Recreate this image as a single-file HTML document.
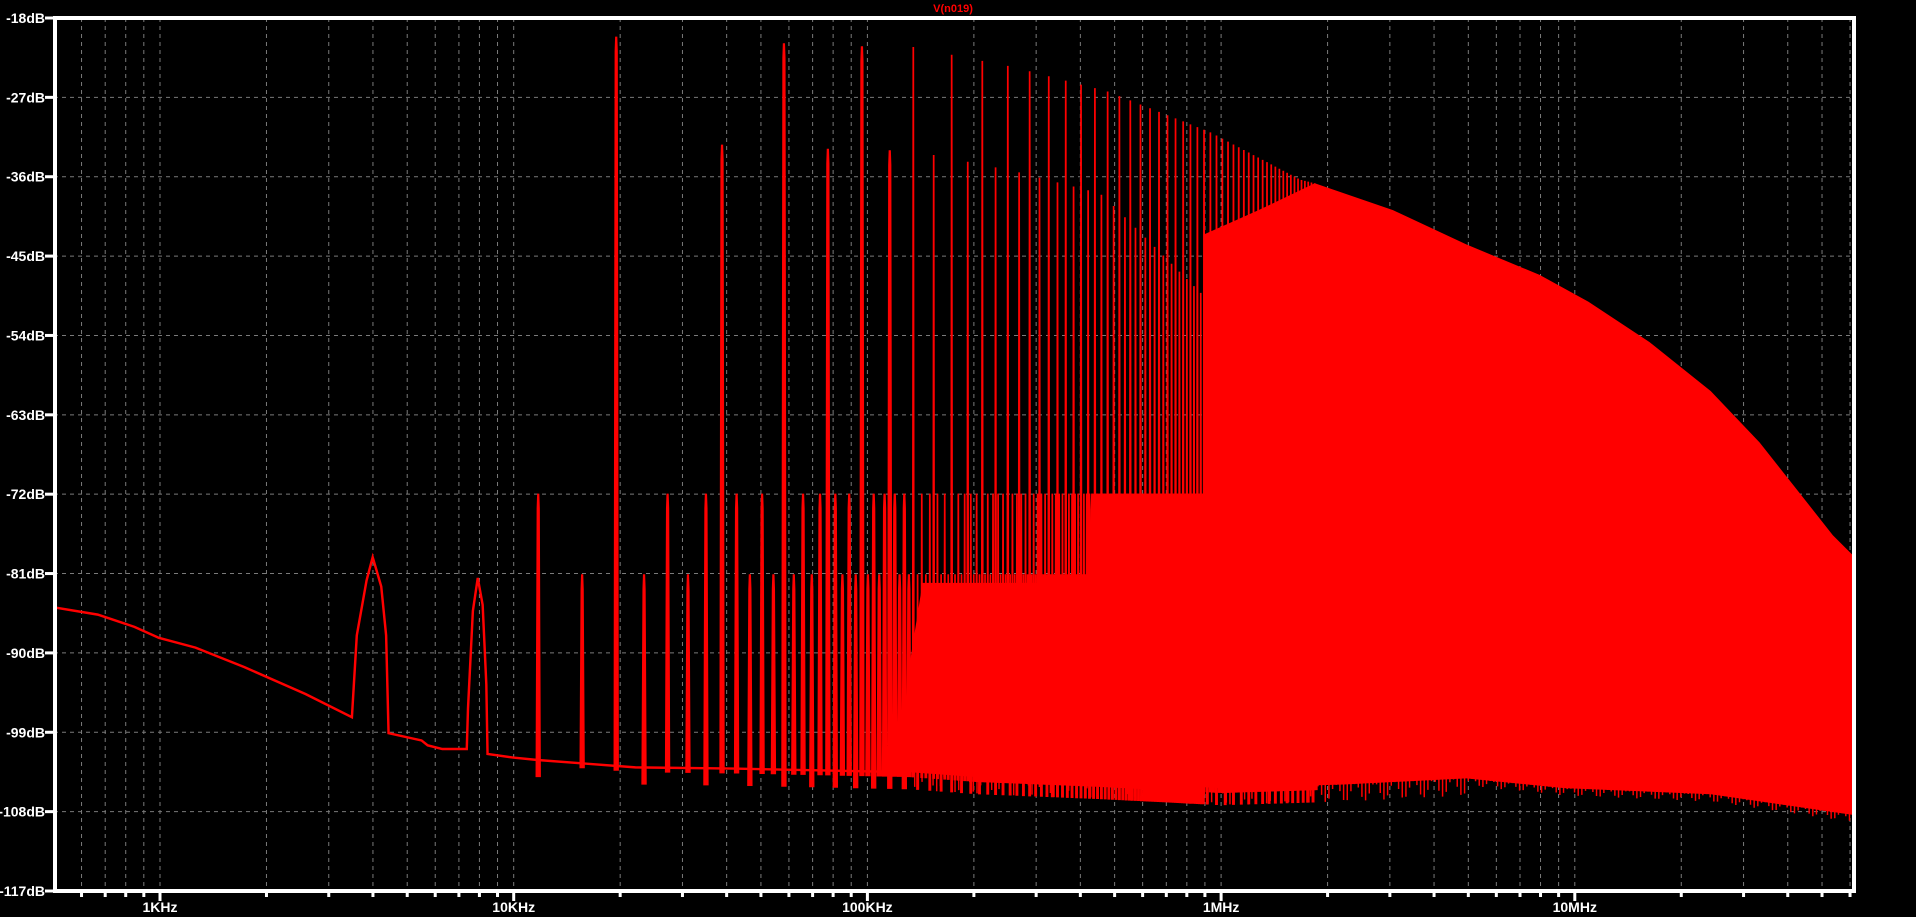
<!DOCTYPE html>
<html><head><meta charset="utf-8"><style>
html,body{margin:0;padding:0;background:#000;width:1916px;height:917px;overflow:hidden}
svg{display:block}
text{font-family:"Liberation Sans",sans-serif;font-weight:bold;fill:#fff}
</style></head><body>
<svg id="s" width="1916" height="917" viewBox="0 0 1916 917" xmlns="http://www.w3.org/2000/svg">
<rect width="1916" height="917" fill="#000"/>
<g id="grid" stroke="#7a7a7a" stroke-width="1" stroke-dasharray="4,4"></g>
<g id="data" transform="scale(1.2219)"></g>
<g id="axes"></g>
<text x="953" y="12" font-size="11" text-anchor="middle" style="fill:#ff0000">V(n019)</text>
</svg>
<script>
var NS="http://www.w3.org/2000/svg";
function el(p,t,a,txt){var e=document.createElementNS(NS,t);for(var k in a)e.setAttribute(k,a[k]);if(txt)e.textContent=txt;document.getElementById(p).appendChild(e);return e;}
var L=54,R=1854,T=18,B=891,D=353.7;
function X(f){return 160+D*Math.log10(f/1000);}
for(var i=1;i<11;i++){var y=T+i*(B-T)/11;el('grid','line',{x1:L,x2:R,y1:y,y2:y});}
var decs=[100,1000,10000,100000,1e6,1e7];
decs.forEach(function(d){for(var m=1;m<10;m++){var x=X(d*m);if(x>L+2&&x<R-2){el('grid','line',{x1:x,x2:x,y1:T,y2:B});
el('axes','rect',{x:x-1.5,y:B,width:3,height:m==1?10:6,fill:'#fff'});}}});
el('axes','rect',{x:L-1,y:T-2,width:R-L+2,height:4,fill:'#fff'});
el('axes','rect',{x:L-1,y:B-2,width:R-L+2,height:4,fill:'#fff'});
el('axes','rect',{x:L-1,y:T-2,width:4,height:B-T+4,fill:'#fff'});
el('axes','rect',{x:R-2,y:T-2,width:4,height:B-T+4,fill:'#fff'});
for(var i=0;i<12;i++){var y=T+i*(B-T)/11;el('axes','rect',{x:L-9,y:y-1.5,width:9,height:3,fill:'#fff'});
el('axes','text',{x:L-9,y:y+5,'font-size':14,'text-anchor':'end'},(-18-9*i)+'dB');}
[['1KHz',1e3],['10KHz',1e4],['100KHz',1e5],['1MHz',1e6],['10MHz',1e7]].forEach(function(a){
el('axes','text',{x:X(a[1]),y:912,'font-size':14,'text-anchor':'middle'},a[0]);});
function xd(f){return 130+287.7*Math.log10(f/1000);}
function interp(pts,x){if(x<=pts[0][0])return pts[0][1];for(var i=1;i<pts.length;i++){if(x<=pts[i][0]){var a=pts[i-1],b=pts[i];return a[1]+(b[1]-a[1])*(x-a[0])/(b[0]-a[0]);}}return pts[pts.length-1][1];}
var base=[[44,497],[80,503],[110,513],[130,522],[160,530],[200,546],[250,568],[288,587],[292,520],[300,475],[305,456],[312,480],[316,520],[318,600],[345,606],[350,610],[362,613],[382,613],[383,580],[387,500],[391,473],[395,495],[398,560],[399,617],[420,620],[440,622],[480,625],[520,628],[600,629],[745,632]];
var d='M'+base.map(function(p){return p[0]+','+p[1]}).join(' L');
el('data','path',{d:d,fill:'none',stroke:'#f00','stroke-width':2});
var top1=[[505,30],[709,38],[745,38],[830,55],[907,75],[990,108],[1064,147],[1076,150]];
var bot=[[745,632],[800,636],[900,640],[1000,645],[1100,642],[1200,637],[1280,645],[1400,650],[1517,667]];
var spk='';
for(var k=3;k<=500;k++){var f=4000*k,x=xd(f);if(x>1078)break;var y;
 if(k%5==0){var m=k/5;var yt=interp(top1,x);y=(m%2==1)?yt:yt+85+Math.max(0,x-900)*0.6;}
 else{if(x>985)continue;y=(k%2==1)?404:470;}
 var yb=(x<745?interp(base,x):interp(bot,x))+(x>440?(k%3==0?14:4):0);
 var w=x<745?2.2:1.2, tw=x<745?0.9:0.7;
 spk+='M'+(x-w)+','+yb+' L'+(x-w*0.6)+','+(y+12)+' L'+(x-tw)+','+y+' L'+(x+tw)+','+y+' L'+(x+w*0.6)+','+(y+12)+' L'+(x+w)+','+yb+' Z ';}
el('data','path',{d:spk,fill:'#f00'});
var topF=[[745,540],[755,477],[890,477],[893,404],[985,404],[985,192],[1030,172],[1076,150],[1140,172],[1200,200],[1260,225],[1300,247],[1350,280],[1400,320],[1440,362],[1470,400],[1500,438],[1517,455]];
var pd='M745,632 '+topF.map(function(p){return 'L'+p[0]+','+p[1]}).join(' ');
var bl=bot.slice().reverse();pd+=' '+bl.map(function(p){return 'L'+p[0]+','+p[1]}).join(' ')+' Z';
el('data','path',{d:pd,fill:'#f00'});
var jg='';for(var x=745;x<1517;x+=3){var yb=interp(bot,x);var dd=(Math.sin(x*1.7)*0.5+0.5)*((x<1200)?14:6);jg+='M'+x+','+(yb-2)+' L'+(x+1.2)+','+(yb-2)+' L'+(x+1.2)+','+(yb+dd)+' L'+x+','+(yb+dd)+' Z ';}
el('data','path',{d:jg,fill:'#f00'});
</script>
</body></html>
